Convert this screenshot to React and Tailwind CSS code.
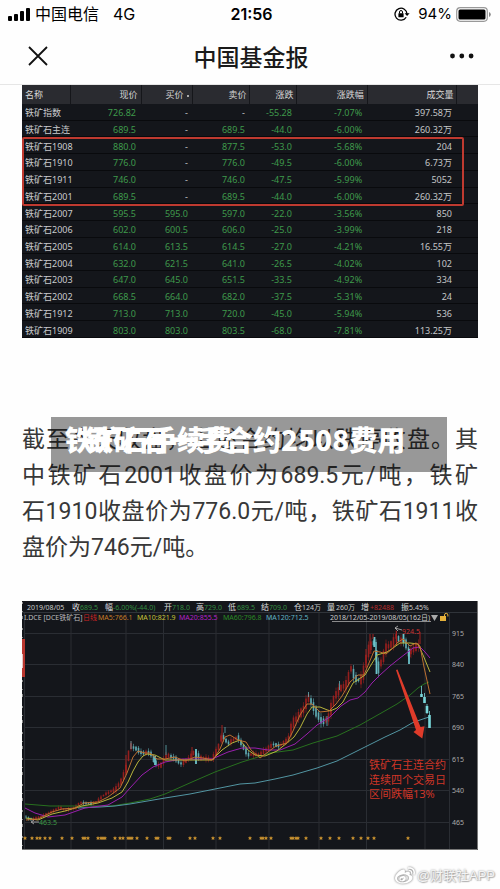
import React from "react";
import { FaWeibo } from "react-icons/fa";

const quotes = [
  ["铁矿指数", "726.82", "-", "-", "-55.28", "-7.07%", "397.58万"],
  ["铁矿石主连", "689.5", "-", "689.5", "-44.0", "-6.00%", "260.32万"],
  ["铁矿石1908", "880.0", "-", "877.5", "-53.0", "-5.68%", "204"],
  ["铁矿石1910", "776.0", "-", "776.0", "-49.5", "-6.00%", "6.73万"],
  ["铁矿石1911", "746.0", "-", "746.0", "-47.5", "-5.99%", "5052"],
  ["铁矿石2001", "689.5", "-", "689.5", "-44.0", "-6.00%", "260.32万"],
  ["铁矿石2007", "595.5", "595.0", "597.0", "-22.0", "-3.56%", "850"],
  ["铁矿石2006", "602.0", "600.5", "606.0", "-25.0", "-3.99%", "218"],
  ["铁矿石2005", "614.0", "613.5", "614.5", "-27.0", "-4.21%", "16.55万"],
  ["铁矿石2004", "632.0", "621.5", "641.0", "-26.5", "-4.02%", "102"],
  ["铁矿石2003", "647.0", "645.0", "651.5", "-33.5", "-4.92%", "334"],
  ["铁矿石2002", "668.5", "664.0", "682.0", "-37.5", "-5.31%", "24"],
  ["铁矿石1912", "713.0", "713.0", "720.0", "-45.0", "-5.94%", "536"],
  ["铁矿石1909", "803.0", "803.0", "803.5", "-68.0", "-7.81%", "113.25万"],
];

const headings = ["名称", "现价", "买价", "卖价", "涨跌", "涨跌幅", "成交量"];

function StatusBar() {
  return (
    <div className="grid h-7 grid-cols-3 items-center pl-2 pr-[9px] font-['Inter','Noto_Sans_CJK_SC',sans-serif] text-[16px] leading-5 text-black">
      <div className="flex items-center">
        <svg width="23" height="13" viewBox="0 0 23 13" aria-hidden="true">
          <rect x="0" y="8" width="4" height="5" rx="1" />
          <rect x="6" y="6" width="4" height="7" rx="1" />
          <rect x="12" y="3" width="4" height="10" rx="1" />
          <rect x="18" y="0" width="4" height="13" rx="1" />
        </svg>
        <span className="ml-1 whitespace-nowrap">中国电信</span>
        <span className="ml-[14px]">4G</span>
      </div>
      <div className="pl-1 text-center font-semibold">21:56</div>
      <div className="flex items-center justify-end">
        <svg width="16" height="14" viewBox="0 0 16 14" fill="none" stroke="#000" strokeWidth="1.3" aria-hidden="true">
          <path d="M12.2 10.2A6 6 0 1 1 13 7" />
          <path d="M10.6 6.2h5L13.1 9z" fill="#000" stroke="none" />
          <rect x="4.4" y="6.2" width="5.2" height="4" rx=".5" fill="#000" stroke="none" />
          <path d="M5.5 6.5V5a1.5 1.5 0 0 1 3 0v1.5" strokeWidth="1" />
        </svg>
        <span className="ml-2 text-[15px]">94%</span>
        <svg className="ml-1" width="35" height="15" viewBox="0 0 35 15" aria-hidden="true">
          <rect x=".7" y=".7" width="30.6" height="13.6" rx="3.5" fill="none" stroke="#999" strokeWidth="1.2" />
          <rect x="2.5" y="2.5" width="27" height="10" rx="1.5" />
          <path d="M33 5v5q1.8-.8 1.8-2.5T33 5z" fill="#888" />
        </svg>
      </div>
    </div>
  );
}

function NavBar() {
  return (
    <header className="grid h-[57px] grid-cols-[1fr_auto_1fr] items-center border-b border-[#e6e6e6] pl-7 pr-[26px] font-['Noto_Sans_CJK_SC',sans-serif]">
      <button type="button" aria-label="关闭" className="justify-self-start">
        <svg width="20" height="20" viewBox="0 0 20 20" fill="none" stroke="#111" strokeWidth="1.8">
          <path d="M1 1l18 18M19 1L1 19" />
        </svg>
      </button>
      <h1 className="text-[23px] font-medium leading-8 text-[#1a1a1a]">中国基金报</h1>
      <button type="button" aria-label="更多" className="justify-self-end">
        <svg width="24" height="6" viewBox="0 0 24 6" fill="#111">
          <circle cx="2.500" cy="3" r="2.400" />
          <circle cx="11.800" cy="3" r="2.400" />
          <circle cx="21.100" cy="3" r="2.400" />
        </svg>
      </button>
    </header>
  );
}

function QuoteTable() {
  return (
    <div className="relative bg-[#14161b] font-['Noto_Sans','Noto_Sans_CJK_SC',sans-serif] text-[9px] leading-[12px]">
      <table className="h-[253px] w-full table-fixed border-collapse">
        <colgroup>
          <col className="w-[10.7%]" />
          <col className="w-[15.4%]" />
          <col className="w-[11.4%]" />
          <col className="w-[12.5%]" />
          <col className="w-[10.3%]" />
          <col className="w-[15.4%]" />
          <col className="w-[19.7%]" />
          <col className="w-[4.6%]" />
        </colgroup>
        <thead>
          <tr className="h-[19px] bg-[#2a2b30] text-[#d8d8d8]">
            {headings.map((h, i) => (
              <th
                key={h}
                scope="col"
                className={
                  i === 0
                    ? "whitespace-nowrap border-r border-[#15161a] p-0 pl-[3px] pt-px text-left font-normal"
                    : "whitespace-nowrap border-r border-[#15161a] p-0 pr-[3px] pt-px text-right font-normal"
                }
              >
                {h}
                {i === 2 && <span className="ml-1 inline-block h-[2px] w-[2px] bg-[#aaa] align-middle" />}
              </th>
            ))}
            <td className="p-0" />
          </tr>
        </thead>
        <tbody>
          {quotes.map((row) => (
            <tr key={row[0]} className="border-b border-[#090a0d]">
              {row.map((v, i) => {
                if (i === 0)
                  return (
                    <th key={i} scope="row" className="whitespace-nowrap p-0 pl-[3px] pt-[3px] text-left font-normal text-[#c9cbcd]">
                      {v}
                    </th>
                  );
                return (
                  <td
                    key={i}
                    className={
                      i === 6 || v === "-"
                        ? "p-0 pr-[5px] pt-[3px] text-right text-[#c4c6c8]"
                        : "p-0 pr-[5px] pt-[3px] text-right text-[#3f9a4b]"
                    }
                  >
                    {v}
                  </td>
                );
              })}
              <td className="p-0" />
            </tr>
          ))}
        </tbody>
      </table>
      <div className="absolute left-0 right-[14px] top-[52px] h-[69px] rounded-[2px] border-2 border-[#bf3a30]" />
    </div>
  );
}

const trend = [
  [26, 817], [30, 819], [38, 817], [52, 812], [60, 808], [65, 811], [75, 808], [80, 802], [95, 803], [105, 795],
  [115, 791], [122, 780], [126, 768], [129, 752], [131, 745], [137, 748], [142, 753], [150, 753], [155, 763],
  [160, 768], [167, 755], [175, 757], [182, 763], [190, 757], [195, 752], [200, 759], [212, 760], [218, 748],
  [222, 734], [228, 742], [238, 737], [243, 747], [248, 756], [260, 755], [265, 750], [273, 743], [280, 745],
  [288, 740], [293, 725], [303, 712], [309, 697], [316, 710], [322, 720], [328, 718], [335, 697], [341, 690],
  [347, 686], [351, 670], [357, 680], [362, 678], [368, 650], [373, 640], [376, 650], [378, 668], [382, 662],
  [386, 650], [393, 645], [396, 638], [400, 641], [405, 640], [409, 652], [415, 646], [420, 643],
];

function priceAt(x) {
  const i = Math.max(1, trend.findIndex((p) => p[0] >= x));
  const [x0, y0] = trend[i - 1];
  const [x1, y1] = trend[i];
  return y0 + ((y1 - y0) * (x - x0)) / (x1 - x0);
}

const candles = Array.from({ length: 158 }, (_, i) => {
  const x = 26 + i * 2.5;
  if (x > 420) return null;
  const volatility = x < 110 ? 0.4 : x < 290 ? 0.65 : 1;
  const slope = priceAt(Math.min(x + 2.5, 420)) - priceAt(Math.max(x - 2.5, 26));
  const wobble = Math.sin(i * 12.9) * 2;
  const body = (1.5 + Math.abs(Math.sin(i * 7.3)) * 4 + Math.abs(slope) * 0.5) * volatility;
  const wick = (0.5 + Math.abs(Math.cos(i * 4.1)) * 3.5) * volatility;
  return { x, y: priceAt(x) + wobble * volatility, body, wick, up: slope + wobble < 0.8 };
}).filter(Boolean);

const fallingCandles = [
  [421.5, 686, 694, 697, 697],
  [424.5, 693, 697, 703, 703],
  [427, 704, 706, 713, 714],
  [429.5, 711, 715, 728, 728],
];

const stars = [
  25, 32, 37, 40, 45, 50, 62, 72, 83, 85, 88, 98, 101, 103, 105, 115, 120, 123, 128, 130, 132, 137, 147, 156, 158,
  168, 170, 190, 195, 213, 220, 250, 261, 263, 266, 271, 291, 293, 296, 298, 306, 321, 330, 339, 353, 361, 368, 374, 408,
];

const priceLabels = [915, 840, 765, 690, 615, 540, 465];
const rowLines = [633, 664, 696, 727, 759, 790, 822];
const columnLines = [24.5, 71, 126, 163.5, 216, 269, 319, 366.5, 425, 449.5];

const averages = [
  ["#28701f", "25,804 50,806 75,806 112,806 130,803 150,799 165,794 192,782 215,772 242,762 255,758 270,753 293,750 313,743 337,736 360,725 383,712 397,704 410,695 418,688 424,684 429,682"],
  ["#5295a2", "78,808 100,807 115,806 130,804 165,798 190,794 215,789 240,784 255,783 275,779 293,775 317,768 337,761 363,748 385,737 400,730 412,723 420,720 429,717"],
  ["#9a1fae", "25,808 35,813 48,817 65,815 85,808 108,805 122,797 130,788 142,775 153,767 165,762 182,759 212,759 228,752 242,748 255,748 268,750 280,750 295,744 307,734 317,725 330,717 341,706 350,700 358,698 365,692 372,683 380,675 390,666 400,658 413,648 420,647 425,652 430,658"],
  ["#b7b43b", "26,818 38,820 52,814 65,811 82,806 98,803 112,798 122,792 128,782 133,771 138,762 143,756 147,754 155,755 165,760 178,760 212,760 222,750 232,743 240,740 248,750 255,755 265,756 277,751 287,743 294,737 300,728 307,714 312,707 320,707 330,711 337,708 343,702 353,683 365,675 371,665 377,655 387,652 393,648 400,643 410,643 418,644 423,655 430,672"],
  ["#bd7030", "26,820 38,819 52,812 62,809 75,808 84,803 98,802 108,797 120,788 127,773 133,757 138,751 145,753 150,753 157,759 165,759 175,757 185,761 195,757 203,758 213,760 220,749 225,737 230,735 238,740 246,742 251,750 260,758 268,752 276,746 287,743 293,731 300,715 307,704 312,704 320,712 329,711 336,704 342,696 350,682 358,675 364,675 369,663 374,651 380,652 386,654 392,649 398,642 403,639 410,646 416,643 420,646 424,667 430,694"],
];

const summary = [
  [27, "2019/08/05", "#c8c8c8"], [72, "收", "#ddd"], [80, "689.5", "#338c40"], [105, "幅", "#ddd"],
  [113, "-6.00%(-44.0)", "#338c40"], [164, "开", "#ddd"], [172, "718.0", "#338c40"], [196, "高", "#ddd"],
  [204, "729.0", "#338c40"], [228, "低", "#ddd"], [237, "689.5", "#338c40"], [261, "结", "#ddd"],
  [269, "709.0", "#338c40"], [294, "仓", "#ddd"], [302, "124万", "#c8c8c8"], [327, "量", "#ddd"],
  [336, "260万", "#c8c8c8"], [361, "增", "#ddd"], [370, "+82488", "#b52c2c"], [401, "振", "#ddd"],
  [409, "5.45%", "#c8c8c8"],
];

const legend = [
  [24, "I.DCE [DCE铁矿石]", "#bbb"], [83, "日线", "#c92323"], [98, "MA5:766.1", "#c57a26"],
  [137, "MA10:821.9", "#c6c139"], [179, "MA20:855.5", "#b321c5"], [223, "MA60:796.8", "#2b8a25"],
  [266, "MA120:712.5", "#61b4c2"],
];

function PriceChart() {
  return (
    <svg
      viewBox="22 601 456 249"
      className="block w-full font-['Noto_Sans','Noto_Sans_CJK_SC',sans-serif] text-[7px]"
      role="img"
      aria-label="铁矿石主连合约日线"
    >
      <rect x="22" y="601" width="456" height="249" fill="#14161b" />
      <g stroke="#2a2d33" strokeWidth="1">
        {rowLines.map((y) => <path key={y} d={`M24 ${y}.5H450`} />)}
        {columnLines.map((x) => <path key={x} d={`M${x} 613V849`} />)}
        <path d="M22 612.5H477" stroke="#30343a" />
      </g>
      <path d="M477.5 601V849.5H22" fill="none" stroke="#777" />
      <path d="M22.5 602V849" stroke="#888" strokeDasharray="2 7 1 4 3 9" strokeWidth="1" />
      <rect x="22" y="639" width="3" height="38" fill="#b9362e" />
      <rect x="22" y="654" width="1" height="14" fill="#e6c6c3" />

      {summary.map(([x, t, c]) => (
        <text key={x} x={x} y="610" fill={c} className={c === "#ddd" ? "text-[8px]" : "text-[7px]"}>{t}</text>
      ))}
      {legend.map(([x, t, c]) => <text key={x} x={x} y="620" fill={c}>{t}</text>)}
      <text x="430" y="620" textAnchor="end" fill="#ccc">2018/12/05-2019/08/05(162日)</text>
      <path d="M332 621.5H431" stroke="#aaa" strokeWidth=".8" />
      <path d="M431 615h7l-3.500 6z" fill="#aaa" />
      <rect x="440" y="616" width="6" height="5" fill="#e5b13a" />
      <path d="M444.500 616v-1a1.700 1.700 0 0 1 3.400 0v1.500" fill="none" stroke="#e5b13a" />

      {candles.map((c) => (
        <g key={c.x} fill={c.up ? "#a3201f" : "#6cc3cb"} opacity={c.up ? 0.9 : 0.85}>
          <rect x={c.x - 0.3} y={c.y - c.body / 2 - c.wick} width=".6" height={c.body + c.wick * 2} />
          <rect x={c.x - 0.8} y={c.y - c.body / 2} width="1.6" height={c.body} />
        </g>
      ))}
      <path d="M222 725v18M396.500 631v14M420 632v12M373 634v5M370 634v20M366 649v14M410 648v9M192 747v12M126 755v20" stroke="#a3201f" />
      <path d="M131 741v8M166 745v10M225 727v6M308.500 692v5M339.500 681v9M327 716v10" stroke="#6cc3cb" strokeWidth=".7" />
      <path d="M374.500 637v10M376.500 650v24M403.500 634v9M409 649v15M196 749v15M155 756v9" stroke="#6cc3cb" strokeWidth="1.800" />

      {averages.map(([c, points]) => (
        <polyline key={c} points={points} fill="none" stroke={c} strokeWidth="1" strokeLinejoin="round" />
      ))}
      {fallingCandles.map(([x, high, top, bottom, low]) => (
        <g key={x} fill="#79d7da">
          <rect x={x - 0.4} y={high} width=".8" height={low - high} />
          <rect x={x - 1.3} y={top} width="2.6" height={bottom - top} />
        </g>
      ))}

      <path d="M402 630L395 628M398 626l-3 2 3 3" fill="none" stroke="#bbb" strokeWidth=".8" />
      <text x="402" y="634" fill="#c93030">924.5</text>
      <path d="M39 822h-7M34 820l-3 2 3 2" fill="none" stroke="#bbb" strokeWidth=".8" />
      <text x="39" y="825" fill="#3d9a45">463.5</text>
      {priceLabels.map((p, i) => <text key={p} x="452" y={rowLines[i] + 3} fill="#aaa">{p}</text>)}

      <path d="M396 670l1.500-.5L420.500 727l4-.8L422.300 738.500 413.500 732l2.500-2z" fill="#df3b2a" />
      <g fill="#cf3527" className="text-[11px]">
        <text x="369" y="769">铁矿石主连合约</text>
        <text x="369" y="784">连续四个交易日</text>
        <text x="369" y="798">区间跌幅13%</text>
      </g>
      {stars.map((x) => (
        <path key={x} transform={`translate(${x} 838)`} d="M0-2l.6 1.300 1.400.1-1 1 .4 1.500L0 1.200l-1.400.7.4-1.500-1-1 1.400-.1z" fill="#c8912f" />
      ))}
    </svg>
  );
}

const storyLines = [
  "截至今天收盘，上述合约均以跌停收盘。其",
  "中铁矿石2001收盘价为689.5元/吨，铁矿",
  "石1910收盘价为776.0元/吨，铁矿石1911收",
];

function Story() {
  return (
    <div className="relative mt-[79px]">
      <p className="pt-[5px] font-['Roboto','Noto_Sans_CJK_SC',sans-serif] text-[23px] font-normal leading-[36px] text-[#383838]">
        {storyLines.map((line) => (
          <span key={line} className="block whitespace-nowrap text-justify [text-align-last:justify]">{line}</span>
        ))}
        <span className="block">盘价为746元/吨。</span>
      </p>
      <div className="absolute left-[29px] right-[31px] top-0 grid h-[55px] items-start bg-black/40 px-[14px] pt-1 font-['Noto_Sans_CJK_SC',sans-serif] text-[28px] font-black leading-[36px] text-white">
        <span className="col-start-1 row-start-1 whitespace-nowrap">铁矿石手续费</span>
        <span className="col-start-1 row-start-1 whitespace-nowrap pl-5">铁矿石一手合约2508费用</span>
      </div>
    </div>
  );
}

export default function App() {
  return (
    <div className="min-h-screen overflow-x-hidden bg-[#fefefe]">
      <StatusBar />
      <NavBar />
      <main className="px-[22px]">
        <QuoteTable />
        <Story />
        <div className="mt-[35px]">
          <PriceChart />
        </div>
      </main>
      <footer className="mt-4 flex items-center justify-end gap-[2px] pr-[5px] font-['Liberation_Sans','Noto_Sans_CJK_SC',sans-serif] text-[13px] leading-5 text-[#f4f4f4] [text-shadow:0_0_2px_#888,1px_1px_1px_#bbb]">
        <FaWeibo className="h-5 w-5 text-white drop-shadow-[0_0_1px_#666]" aria-hidden="true" />
        <span>@财联社APP</span>
      </footer>
    </div>
  );
}
